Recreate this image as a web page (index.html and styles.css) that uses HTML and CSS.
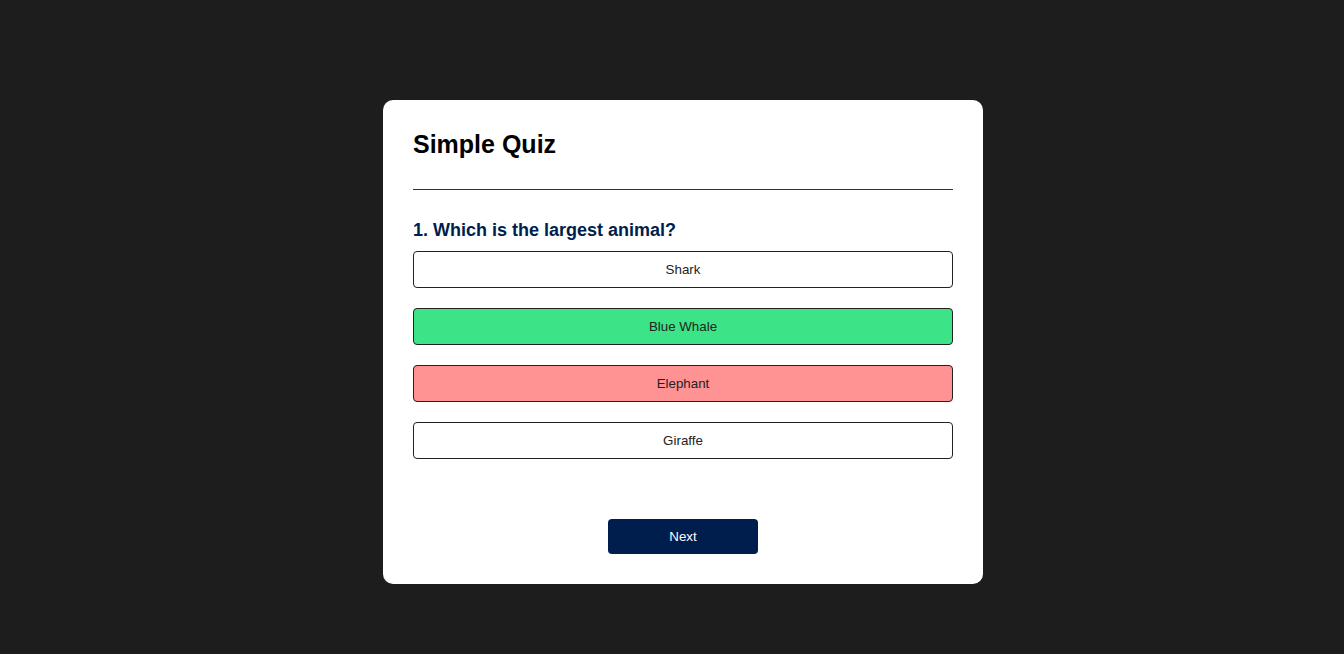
FILE: index.html
```html
<!DOCTYPE html>
<html lang="en">
<head>
<meta charset="utf-8">
<title>Simple Quiz</title>
<link rel="stylesheet" href="styles.css">
</head>
<body>
<div class="app">
  <h1 class="title">Simple Quiz</h1>
  <div class="quiz">
    <h2 class="question">1. Which is the largest animal?</h2>
    <div class="answers">
      <button class="btn">Shark</button>
      <button class="btn correct">Blue Whale</button>
      <button class="btn incorrect">Elephant</button>
      <button class="btn">Giraffe</button>
    </div>
    <button class="next-btn">Next</button>
  </div>
</div>
</body>
</html>
```

FILE: styles.css
```css
* {
  box-sizing: border-box;
}

body {
  margin: 0;
  padding-left: 22px;
  background: #1d1d1e;
  font-family: "Liberation Sans", Arial, sans-serif;
}

.app {
  width: 600px;
  margin: 100px auto 0;
  background: #fff;
  border-radius: 10px;
  padding: 30px;
}

.title {
  margin: 0;
  font-size: 25px;
  font-weight: 700;
  color: #000;
  padding-bottom: 30px;
  border-bottom: 1px solid #333;
}

.quiz {
  padding-top: 30px;
  display: flex;
  flex-direction: column;
}

.question {
  margin: 0;
  font-size: 18px;
  font-weight: 700;
  color: #001e4d;
}

.answers {
  margin-top: 10px;
  display: flex;
  flex-direction: column;
  gap: 20px;
}

.btn {
  display: block;
  width: 100%;
  background: #fff;
  color: #222;
  font-family: "Liberation Sans", Arial, sans-serif;
  font-size: 13.333px;
  border: 1px solid #222;
  border-radius: 4px;
  padding: 10px;
  line-height: 15px;
  text-align: center;
}

.btn.correct {
  background: #3de487;
}

.btn.incorrect {
  background: #ff9393;
}

.next-btn {
  align-self: center;
  width: 150px;
  margin-top: 60px;
  background: #001e4d;
  color: #fff;
  font-family: "Liberation Sans", Arial, sans-serif;
  font-size: 13.333px;
  line-height: 15px;
  border: 0;
  border-radius: 4px;
  padding: 10px;
  height: 35px;
}
```
